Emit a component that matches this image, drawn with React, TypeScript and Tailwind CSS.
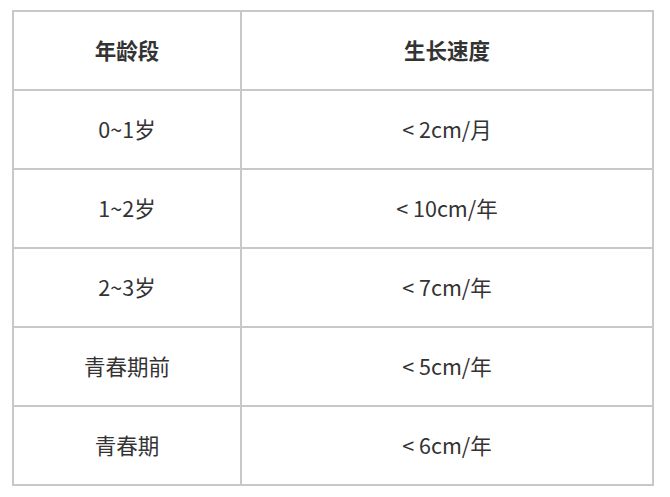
import React from 'react';

const rows: [string, string][] = [
  ['0~1岁', '< 2cm/月'],
  ['1~2岁', '< 10cm/年'],
  ['2~3岁', '< 7cm/年'],
  ['青春期前', '< 5cm/年'],
  ['青春期', '< 6cm/年'],
];

export default function App() {
  return (
    <div className="w-[670px] h-[497px] bg-white pt-[10px] pl-[12px]" style={{ fontFamily: '"Noto Sans CJK SC", "Noto Sans", sans-serif' }}>
      <table className="border-collapse w-[642px] text-[#333] text-[21.5px]">
        <thead>
          <tr className="h-[79px]">
            <th className="w-[228px] border-2 border-[#c8c8c8] font-bold text-center">年龄段</th>
            <th className="border-2 border-[#c8c8c8] font-bold text-center">生长速度</th>
          </tr>
        </thead>
        <tbody>
          {rows.map(([age, speed]) => (
            <tr key={age} className="h-[79px]">
              <td className="border-2 border-[#c8c8c8] text-center">{age}</td>
              <td className="border-2 border-[#c8c8c8] text-center">{speed}</td>
            </tr>
          ))}
        </tbody>
      </table>
    </div>
  );
}
